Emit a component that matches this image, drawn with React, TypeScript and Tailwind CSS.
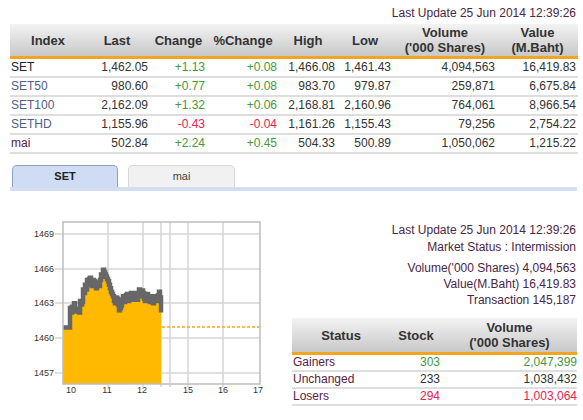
import React from "react";

type Row = {
  name: string;
  nc: string;
  last: string;
  ch: string;
  pc: string;
  hi: string;
  lo: string;
  vol: string;
  val: string;
  up: boolean;
};

const rows: Row[] = [
  { name: "SET", nc: "text-[#222222]", last: "1,462.05", ch: "+1.13", pc: "+0.08", hi: "1,466.08", lo: "1,461.43", vol: "4,094,563", val: "16,419.83", up: true },
  { name: "SET50", nc: "text-[#4f6088]", last: "980.60", ch: "+0.77", pc: "+0.08", hi: "983.70", lo: "979.87", vol: "259,871", val: "6,675.84", up: true },
  { name: "SET100", nc: "text-[#4f6088]", last: "2,162.09", ch: "+1.32", pc: "+0.06", hi: "2,168.81", lo: "2,160.96", vol: "764,061", val: "8,966.54", up: true },
  { name: "SETHD", nc: "text-[#4f6088]", last: "1,155.96", ch: "-0.43", pc: "-0.04", hi: "1,161.26", lo: "1,155.43", vol: "79,256", val: "2,754.22", up: false },
  { name: "mai", nc: "text-[#5a2045]", last: "502.84", ch: "+2.24", pc: "+0.45", hi: "504.33", lo: "500.89", vol: "1,050,062", val: "1,215.22", up: true },
];

const data: [number, number][] = [
  [63, 1460.9], [69, 1460.9], [70, 1462.6], [71, 1462.2], [72, 1462.7], [73, 1462.4], [74, 1463.0], [75, 1462.3], [77, 1462.5], [79, 1462.2],
  [80, 1463.2], [81, 1462.9], [82, 1463.1], [83, 1464.2], [84, 1463.9], [85, 1464.6], [86, 1464.2], [87, 1465.0], [88, 1464.6], [89, 1465.1], [90, 1465.2], [91, 1464.8], [92, 1464.5],
  [93, 1465.0], [94, 1464.9], [95, 1464.6], [96, 1464.3], [97, 1464.7], [98, 1464.8], [99, 1464.5], [100, 1465.0], [101, 1465.5], [102, 1465.3], [103, 1465.9], [104, 1465.7], [105, 1465.5], [106, 1465.3], [107, 1465.1],
  [108, 1464.9], [109, 1464.6], [110, 1464.3], [111, 1464.0], [112, 1463.8], [113, 1463.6], [114, 1463.2], [115, 1463.0], [116, 1463.5], [117, 1463.4], [118, 1462.9], [119, 1462.4], [120, 1462.6], [121, 1462.8], [122, 1463.3], [123, 1463.6],
  [124, 1463.1], [125, 1463.2], [126, 1463.7], [127, 1463.8], [128, 1463.2], [129, 1463.4], [130, 1463.6], [131, 1463.9], [132, 1463.3], [133, 1463.5], [134, 1463.7], [135, 1463.9], [136, 1463.5], [137, 1463.3], [138, 1463.8], [139, 1464.2],
  [140, 1463.8], [141, 1463.6], [142, 1464.1], [143, 1463.9], [144, 1463.4], [145, 1463.2], [146, 1463.6], [147, 1463.8], [148, 1463.3], [149, 1463.4], [150, 1463.1], [151, 1463.6], [152, 1463.2], [153, 1463.0], [154, 1463.3], [155, 1463.6],
  [156, 1463.2], [157, 1463.3], [158, 1463.7], [159, 1464.0], [160, 1463.5], [161, 1462.2],
];

const yOf = (v: number) => 338 - (v - 1460) * 11.57;

function stepPoints(): string {
  const pts: string[] = [];
  for (let i = 0; i < data.length; i++) {
    const [x, v] = data[i];
    const y = yOf(v);
    if (i > 0) {
      const py = yOf(data[i - 1][1]);
      pts.push(`${x},${py.toFixed(1)}`);
    }
    pts.push(`${x},${y.toFixed(1)}`);
  }
  return pts.join(" ");
}

function Chart() {
  const line = stepPoints();
  const fill = `63,384 ${line} 161,384`;
  const hLines = [
    { y: 234, l: "1469" },
    { y: 269, l: "1466" },
    { y: 303, l: "1463" },
    { y: 338, l: "1460" },
    { y: 373, l: "1457" },
  ];
  const vLines = [108, 143, 161, 170, 188, 223];
  const xLabels = [
    { x: 71, l: "10" },
    { x: 107, l: "11" },
    { x: 142, l: "12" },
    { x: 188, l: "15" },
    { x: 223, l: "16" },
    { x: 258, l: "17" },
  ];
  return (
    <svg width={280} height={229} viewBox="0 191 280 229" className="shrink-0">
      <rect x={63} y={222} width={197} height={162} fill="#ffffff" />
      {hLines.map((h) => (
        <line key={h.y} x1={55} x2={260} y1={h.y} y2={h.y} stroke="#d4d4d4" strokeWidth={1.5} />
      ))}
      {vLines.map((x) => (
        <line key={x} x1={x} x2={x} y1={222} y2={387} stroke="#d4d4d4" strokeWidth={1.5} />
      ))}
      <polygon points={fill} fill="#ffb900" />
      <polyline points={line} fill="none" stroke="#676767" strokeWidth={4.5} strokeLinejoin="miter" />
      <line x1={162} x2={260} y1={327} y2={327} stroke="#f7a51c" strokeWidth={1.3} strokeDasharray="3 2" />
      <rect x={63} y={222} width={197} height={162} fill="none" stroke="#bdbdbd" strokeWidth={1.5} />
      {hLines.map((h) => (
        <text key={h.l} x={54} y={h.y + 3} textAnchor="end" fontSize={9} fill="#333333" fontFamily="'Liberation Sans', Arial, sans-serif">
          {h.l}
        </text>
      ))}
      {xLabels.map((t) => (
        <text key={t.l} x={t.x} y={393} textAnchor="middle" fontSize={9} fill="#333333" fontFamily="'Liberation Sans', Arial, sans-serif">
          {t.l}
        </text>
      ))}
    </svg>
  );
}

export default function App() {
  const up = "text-[#3f9a3c]";
  const down = "text-[#e5234f]";
  return (
    <div className="w-[583px] h-[420px] bg-white overflow-hidden font-['Liberation_Sans',Arial,sans-serif] text-[12px] text-[#333333]">
      <div className="h-[24px] pt-[5px] pr-[7px] text-right leading-[16px] text-[#4a2545]">
        Last Update 25 Jun 2014 12:39:26
      </div>

      <div className="ml-[10px] w-[568px]">
        <div className="grid grid-cols-[86px_54px_57px_72px_58px_56px_104px_81px] h-[35px] bg-linear-to-b from-[#f3f3f3] to-[#c8c8c8] border-b-[3px] border-[#f3a521] font-bold text-[13px] leading-[15px] text-[#333333] items-center text-center">
          <div className="pr-[10px]">Index</div>
          <div className="pr-[12px]">Last</div>
          <div>Change</div>
          <div>%Change</div>
          <div>High</div>
          <div>Low</div>
          <div>
            Volume
            <br />
            ('000 Shares)
          </div>
          <div>
            Value
            <br />
            (M.Baht)
          </div>
        </div>
        {rows.map((r) => (
          <div
            key={r.name}
            className="grid grid-cols-[86px_54px_57px_72px_58px_56px_104px_81px] h-[19px] border-b-2 border-[#dedede] items-center leading-[17px]"
          >
            <div className={`pl-[1px] ${r.nc}`}>{r.name}</div>
            <div className="text-right pr-[2px]">{r.last}</div>
            <div className={`text-right pr-[2px] ${r.up ? up : down}`}>{r.ch}</div>
            <div className={`text-right pr-[2px] ${r.up ? up : down}`}>{r.pc}</div>
            <div className="text-right pr-[2px]">{r.hi}</div>
            <div className="text-right pr-[2px]">{r.lo}</div>
            <div className="text-right pr-[2px]">{r.vol}</div>
            <div className="text-right pr-[2px]">{r.val}</div>
          </div>
        ))}
      </div>

      <div className="mt-[11px] ml-[12px] flex gap-[10px] items-end">
        <div className="w-[106px] h-[22px] rounded-t-[5px] border border-b-0 border-[#8d9fc2] bg-[#cfdcf4] text-center font-bold text-[11px] leading-[20px] text-[#222222]">
          SET
        </div>
        <div className="w-[107px] h-[22px] rounded-t-[5px] border border-b-0 border-[#d8d8d8] bg-[#f1f1f1] text-center text-[11px] leading-[20px] text-[#444444]">
          mai
        </div>
      </div>
      <div className="ml-[10px] w-[567px] h-[4px] bg-[#d3def5]" />

      <div className="flex">
        <Chart />
        <div className="flex-1 flex flex-col items-end pr-[6px] pt-[31px] text-[#4a2545] leading-[16px]">
          <div className="pr-[1px]">Last Update 25 Jun 2014 12:39:26</div>
          <div className="pr-[1px] mt-[1px]">Market Status : Intermission</div>
          <div className="pr-[1px] mt-[5px]">Volume('000 Shares) 4,094,563</div>
          <div className="pr-[1px]">Value(M.Baht) 16,419.83</div>
          <div className="pr-[1px]">Transaction 145,187</div>

          <div className="mt-[10px] w-[285px]">
            <div className="grid grid-cols-[98px_52px_135px] h-[37px] bg-linear-to-b from-[#f3f3f3] to-[#c8c8c8] border-b-[3px] border-[#f3a521] font-bold text-[13px] leading-[15px] text-[#333333] items-center text-center">
              <div>Status</div>
              <div>Stock</div>
              <div>
                Volume
                <br />
                ('000 Shares)
              </div>
            </div>
            {[
              { s: "Gainers", n: "303", v: "2,047,399", c: up },
              { s: "Unchanged", n: "233", v: "1,038,432", c: "text-[#333333]" },
              { s: "Losers", n: "294", v: "1,003,064", c: down },
            ].map((r) => (
              <div key={r.s} className="grid grid-cols-[98px_52px_135px] h-[17px] border-b-2 border-[#dedede] items-center leading-[15px]">
                <div className="pl-[1px] text-[#5a2045]">{r.s}</div>
                <div className={`text-right pr-[2px] ${r.c}`}>{r.n}</div>
                <div className={`text-right ${r.c}`}>{r.v}</div>
              </div>
            ))}
          </div>
        </div>
      </div>
    </div>
  );
}
